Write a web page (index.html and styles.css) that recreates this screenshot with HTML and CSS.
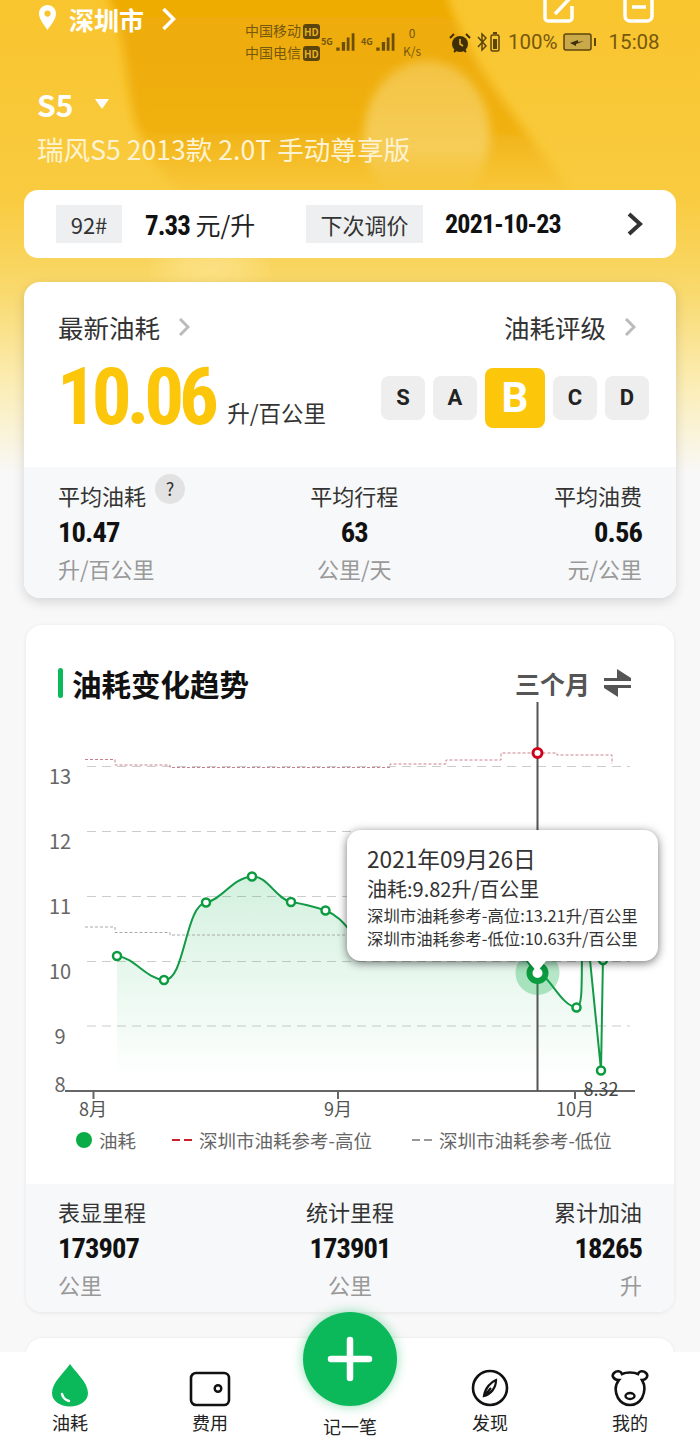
FILE: index.html
```html
<!DOCTYPE html>
<html lang="zh-CN">
<head>
    <meta charset="UTF-8">
    <meta name="viewport" content="width=device-width, initial-scale=1.0">
    <title>油耗</title>
    <link rel="stylesheet" href="styles.css">
</head>
<body>
<div class="page">
    <!-- yellow backdrop behind the header -->
    <svg class="hero-bg" viewBox="0 0 700 500" preserveAspectRatio="none">
        <defs>
            <linearGradient id="heroFade" x1="0" y1="0" x2="0" y2="1">
                <stop offset="0" stop-color="#f9c52e"/>
                <stop offset="0.4" stop-color="#f9cb40"/>
                <stop offset="0.58" stop-color="#f9d96c"/>
                <stop offset="0.78" stop-color="#fbeeb9"/>
                <stop offset="0.95" stop-color="#f8f8f8"/>
            </linearGradient>
            <linearGradient id="blobFill" x1="0" y1="0" x2="0" y2="1">
                <stop offset="0" stop-color="#eeaa04"/>
                <stop offset="0.6" stop-color="#f0b010"/>
                <stop offset="1" stop-color="#f6c232" stop-opacity="0"/>
            </linearGradient>
            <linearGradient id="eggFill" x1="0" y1="0" x2="0" y2="1">
                <stop offset="0" stop-color="#f3c343"/>
                <stop offset="0.6" stop-color="#f6cd58"/>
                <stop offset="1" stop-color="#f7c83c" stop-opacity="0"/>
            </linearGradient>
            <filter id="soft"><feGaussianBlur stdDeviation="5"/></filter>
            <filter id="softer"><feGaussianBlur stdDeviation="14"/></filter>
        </defs>
        <rect width="700" height="500" fill="url(#heroFade)"/>
        <path d="M105 -10C140 60 110 130 180 190C300 225 470 230 570 190C520 120 470 70 445 -10Z" fill="url(#blobFill)" filter="url(#soft)"/>
        <ellipse cx="427" cy="135" rx="63" ry="74" fill="url(#eggFill)" filter="url(#soft)"/>
        <ellipse cx="210" cy="268" rx="50" ry="12" fill="#fde694" filter="url(#softer)"/>
    </svg>

    <!-- phone status bar, sits over the header -->
    <div class="status-bar">
        <div class="carriers">
            <div>中国移动<span class="hd">HD</span></div>
            <div>中国电信<span class="hd">HD</span></div>
        </div>
        <div class="signal"><span class="net">5G</span>
            <svg width="22" height="22" viewBox="0 0 20 20"><path d="M3 15h3v3H3zM8 10h3v8H8zM12.500 6h2.500v12h-2.500zM17 2h2.500v16H17z" fill="#6b4e08"/></svg>
        </div>
        <div class="signal"><span class="net">4G</span>
            <svg width="22" height="22" viewBox="0 0 20 20"><path d="M3 15h3v3H3zM8 10h3v8H8zM12.500 6h2.500v12h-2.500zM17 2h2.500v16H17z" fill="#6b4e08"/></svg>
        </div>
        <div class="speed"><span>0</span><span>K/s</span></div>
        <svg class="alarm" width="22" height="22" viewBox="0 0 22 22">
            <circle cx="11" cy="12" r="8" fill="#3f2f08"/>
            <path d="M11 7v5l3 2" stroke="#e8b020" stroke-width="1.600" fill="none"/>
            <path d="M1 6l4-4M21 6l-4-4M5 20l2-2M17 20l-2-2" stroke="#3f2f08" stroke-width="2"/>
        </svg>
        <svg class="bt" width="12" height="22" viewBox="0 0 12 22"><path d="M2 6l8 9-4 4V3l4 4-8 9" stroke="#5c450d" stroke-width="1.500" fill="none"/></svg>
        <svg class="mini-batt" width="10" height="20" viewBox="0 0 10 20"><rect x="1" y="3" width="8" height="16" rx="1.500" fill="none" stroke="#5c450d" stroke-width="1.500"/><rect x="3" y="7" width="4" height="10" fill="#5c450d"/><rect x="3" y="0" width="4" height="2" fill="#5c450d"/></svg>
        <span class="pct">100%</span>
        <svg class="batt" width="34" height="20" viewBox="0 0 34 20">
            <rect x="1" y="2" width="27" height="16" rx="2" fill="#c9a94a" stroke="#5c450d" stroke-width="1.500"/>
            <path d="M7 11l8-3v2l6-1-8 3v2z" fill="#3f2f08"/>
            <rect x="31" y="6" width="2" height="8" fill="#5c450d"/>
        </svg>
        <span class="clock">15:08</span>
    </div>

    <header class="hero">
        <div class="loc-row">
            <svg class="pin" width="17" height="25" viewBox="0 0 17 25"><path fill-rule="evenodd" d="M8.500 0C3.800 0 0 3.800 0 8.500 0 14 5 20 8.500 25 12 20 17 14 17 8.500 17 3.800 13.200 0 8.500 0zm0 5.500a3 3 0 1 1 0 6.200 3 3 0 0 1 0-6.200z" fill="#fff"/></svg>
            <span class="city">深圳市</span>
            <svg class="city-arrow" width="15" height="24" viewBox="0 0 15 24"><path d="M2.500 2l10 10-10 10" stroke="#fff" stroke-width="3.500" fill="none"/></svg>
            <div class="top-actions">
                <svg width="34" height="30" viewBox="0 0 34 30"><path d="M20 0H8a5 5 0 0 0-3 0 3 3 0 0 0-3 3v18a3 3 0 0 0 3 3h21a3 3 0 0 0 3-3V9M12 17L29-1" stroke="#fff" stroke-width="3.500" fill="none"/></svg>
                <svg width="32" height="30" viewBox="0 0 32 30"><path d="M2 0v19a5 5 0 0 0 5 5h17a5 5 0 0 0 5-5V0M9 1h14M9 10h14" stroke="#fff" stroke-width="3.500" fill="none"/></svg>
            </div>
        </div>
        <div class="car-row">
            <span class="car-name">S5</span>
            <span class="car-caret"></span>
        </div>
        <div class="car-model">瑞风S5 2013款 2.0T 手动尊享版</div>
    </header>

    <section class="price-bar">
        <span class="tag tag-oil">92#</span>
        <span class="price"><b class="num">7.33</b> 元/升</span>
        <span class="tag tag-next">下次调价</span>
        <b class="num next-date">2021-10-23</b>
        <svg class="price-arrow" width="18" height="24" viewBox="0 0 18 24"><path d="M3 2l11 10L3 22" stroke="#333" stroke-width="4" fill="none"/></svg>
    </section>

    <section class="card card-latest">
        <div class="latest-top">
            <div class="latest-heads">
                <span class="head-link">最新油耗<svg width="12" height="18" viewBox="0 0 12 18"><path d="M2 1l8 8-8 8" stroke="#bbb" stroke-width="3" fill="none"/></svg></span>
                <span class="head-link">油耗评级<svg width="12" height="18" viewBox="0 0 12 18"><path d="M2 1l8 8-8 8" stroke="#bbb" stroke-width="3" fill="none"/></svg></span>
            </div>
            <div class="latest-main">
                <span class="big-value num">10.06</span>
                <span class="big-unit">升/百公里</span>
                <div class="grades">
                    <span class="grade">S</span>
                    <span class="grade">A</span>
                    <span class="grade active">B</span>
                    <span class="grade">C</span>
                    <span class="grade">D</span>
                </div>
            </div>
        </div>
        <div class="stats stats-latest">
            <div class="stat">
                <div class="stat-label">平均油耗<span class="help">?</span></div>
                <div class="stat-value num">10.47</div>
                <div class="stat-unit">升/百公里</div>
            </div>
            <div class="stat center">
                <div class="stat-label">平均行程</div>
                <div class="stat-value num">63</div>
                <div class="stat-unit">公里/天</div>
            </div>
            <div class="stat right">
                <div class="stat-label">平均油费</div>
                <div class="stat-value num">0.56</div>
                <div class="stat-unit">元/公里</div>
            </div>
        </div>
    </section>

    <section class="card card-trend">
        <div class="trend-head">
            <span class="trend-bar"></span>
            <h2 class="trend-title">油耗变化趋势</h2>
            <span class="trend-range">三个月</span>
            <svg class="swap" width="27" height="28" viewBox="0 0 27 28"><path d="M13 0l14 9v3H0V9h13zM14 28L0 19v-3h27v3H14z" fill="#555"/></svg>
        </div>

        <div class="chart">
            <!-- viewBox uses page coordinates so the data reads straight off the picture -->
            <svg class="chart-svg" width="648" height="409" viewBox="26 702 648 409">
                <defs>
                    <linearGradient id="areaFill" x1="0" y1="0" x2="0" y2="1">
                        <stop offset="0" stop-color="#0cb04a" stop-opacity="0.18"/>
                        <stop offset="0.45" stop-color="#0cb04a" stop-opacity="0.1"/>
                        <stop offset="1" stop-color="#0cb04a" stop-opacity="0"/>
                    </linearGradient>
                </defs>
                <g class="grid">
                    <path d="M87 766.500H630M87 831.500H630M87 896.500H630M87 961.500H630M87 1026H630"/>
                </g>
                <path d="M117 956C135 958 145 978 164 980C185 982 185 905 206 902.500C222 900 232 878 252 876.500C268 876 275 898 291 902C305 904 312 906 325.500 910.500C345 918 350 935 360 940C420 900 500 920 525 958C530 965 533 970 537.500 973C550 975 560 1005 576.500 1007.500C585 1008 580 960 583 900C586 880 587 900 590 960L601 1070L603 957V1080H117Z" fill="url(#areaFill)"/>
                <path class="ref-high" d="M85 759.500H115V765H170V767.500H390V764H446V760H501V753H557V755H612V764"/>
                <path class="ref-low" d="M85 927H115V932.500H170V935H350"/>
                <path class="fuel-line" d="M117 956C135 958 145 978 164 980C185 982 185 905 206 902.500C222 900 232 878 252 876.500C268 876 275 898 291 902C305 904 312 906 325.500 910.500C345 918 350 935 360 940C420 900 500 920 525 958C530 965 533 970 537.500 973C550 975 560 1005 576.500 1007.500C585 1008 580 960 583 900C586 880 587 900 590 960L601 1070L603 957"/>
                <g class="fuel-dots">
                    <circle cx="117" cy="956" r="4"/><circle cx="164" cy="980" r="4"/>
                    <circle cx="206" cy="902.500" r="4"/><circle cx="252" cy="876.500" r="4"/>
                    <circle cx="291" cy="902" r="4"/><circle cx="325.500" cy="910.500" r="4"/>
                    <circle cx="576.500" cy="1007.500" r="4"/><circle cx="601" cy="1070.500" r="4"/>
                    <circle cx="603" cy="960" r="4"/>
                </g>
                <path class="axis" d="M65 1091H635M93.500 1091V1099M338 1091V1099M575 1091V1099"/>
                <path class="cursor" d="M537.500 702V1091"/>
                <circle cx="537.500" cy="753" r="4.500" fill="#fff" stroke="#d0021b" stroke-width="3"/>
                <circle cx="537.500" cy="973" r="22" fill="#0cb04a" fill-opacity="0.3"/>
                <circle cx="537.500" cy="973" r="8" fill="#fff" stroke="#0a9c3e" stroke-width="6"/>
                <g class="y-labels">
                    <text x="60" y="784">13</text><text x="60" y="849">12</text>
                    <text x="60" y="914">11</text><text x="60" y="979">10</text>
                    <text x="60" y="1044">9</text><text x="60" y="1092">8</text>
                </g>
                <text class="peak-label" x="601" y="1096">8.32</text>
            </svg>
            <div class="x-labels">
                <span class="x-label x-aug">8月</span>
                <span class="x-label x-sep">9月</span>
                <span class="x-label x-oct">10月</span>
            </div>
            <div class="tooltip">
                <div class="tip-date">2021年09月26日</div>
                <div class="tip-main">油耗:9.82升/百公里</div>
                <div class="tip-ref">深圳市油耗参考-高位:13.21升/百公里</div>
                <div class="tip-ref">深圳市油耗参考-低位:10.63升/百公里</div>
            </div>
        </div>

        <div class="legend">
            <span class="legend-dot"></span><span class="legend-text">油耗</span>
            <span class="legend-dash red"></span><span class="legend-text">深圳市油耗参考-高位</span>
            <span class="legend-dash gray"></span><span class="legend-text">深圳市油耗参考-低位</span>
        </div>

        <div class="stats stats-trend">
            <div class="stat">
                <div class="stat-label">表显里程</div>
                <div class="stat-value num">173907</div>
                <div class="stat-unit">公里</div>
            </div>
            <div class="stat center">
                <div class="stat-label">统计里程</div>
                <div class="stat-value num">173901</div>
                <div class="stat-unit">公里</div>
            </div>
            <div class="stat right">
                <div class="stat-label">累计加油</div>
                <div class="stat-value num">18265</div>
                <div class="stat-unit">升</div>
            </div>
        </div>
    </section>

    <div class="card card-next"></div>

    <nav class="tabbar">
        <div class="tab active">
            <svg width="38" height="44" viewBox="0 0 38 44"><path d="M19 1C14 9 1 19 1 30c0 8 8 13.500 18 13.500S37 38 37 30C37 19 24 9 19 1z" fill="#0cb95a"/><path d="M11 31c1 4 3 6 7 7" stroke="#fff" stroke-width="2.500" fill="none" stroke-linecap="round"/></svg>
            <span>油耗</span>
        </div>
        <div class="tab">
            <svg width="42" height="36" viewBox="0 0 42 36"><rect x="2" y="2" width="38" height="32" rx="5" fill="none" stroke="#111" stroke-width="2.600"/><circle cx="29" cy="17.500" r="3.300" fill="none" stroke="#111" stroke-width="2.400"/></svg>
            <span>费用</span>
        </div>
        <div class="tab tab-add">
            <span>记一笔</span>
        </div>
        <div class="tab">
            <svg width="38" height="38" viewBox="0 0 38 38"><circle cx="19" cy="19" r="17" fill="none" stroke="#111" stroke-width="2.600"/><path d="M25 11C20 13 14 19 13 27 20 25 25 19 25 11zM13 27l7-8" fill="none" stroke="#111" stroke-width="2.200"/></svg>
            <span>发现</span>
        </div>
        <div class="tab">
            <svg width="38" height="38" viewBox="0 0 38 38"><path d="M8 11C3 11 0 7 3 4 6 1 10 2 11 5 15 3 23 3 27 5 28 2 32 1 35 4 38 7 35 11 31 11 34 16 34 23 31 29 28 34 24 36 19 36 14 36 10 34 7 29 4 23 4 16 8 11z" fill="none" stroke="#111" stroke-width="2.600"/><ellipse cx="19" cy="27" rx="4.500" ry="3" fill="none" stroke="#111" stroke-width="2.400"/></svg>
            <span>我的</span>
        </div>
        <div class="fab">
            <svg width="46" height="46" viewBox="0 0 46 46"><path d="M23 4V42M4 23H42" stroke="#fff" stroke-width="6.500" stroke-linecap="round"/></svg>
        </div>
    </nav>
</div>
</body>
</html>
```

FILE: styles.css
```css
* {
    box-sizing: border-box;
}
body {
    margin: 0;
    background: #f8f8f8;
    font-family: "Noto Sans CJK SC", "Noto Sans", sans-serif;
    color: #222;
}
.page {
    position: relative;
    width: 700px;
    height: 1443px;
    overflow: hidden;
    background: #f8f8f8;
}
.num {
    font-family: "Roboto Condensed", Roboto, sans-serif;
    font-weight: 700;
}

/* header */
.hero-bg {
    position: absolute;
    left: 0;
    top: 0;
    width: 700px;
    height: 500px;
}
.hero {
    position: relative;
    height: 190px;
    padding: 0 37px;
    color: #fff;
}
.loc-row {
    display: flex;
    align-items: center;
    height: 38px;
}
.pin {
    margin-left: 2px;
    margin-top: -4px;
}
.city {
    margin-left: 13px;
    font-size: 25px;
    font-weight: 700;
}
.city-arrow {
    margin-left: 17px;
}
.top-actions {
    position: absolute;
    top: -3px;
    left: 543px;
    display: flex;
    gap: 46px;
}
.car-row {
    display: flex;
    align-items: center;
    height: 40px;
    margin-top: 46px;
}
.car-name {
    font-size: 30px;
    font-weight: 700;
}
.car-caret {
    width: 0;
    height: 0;
    margin-left: 22px;
    border-left: 7px solid transparent;
    border-right: 7px solid transparent;
    border-top: 10px solid #fff;
}
.car-model {
    margin-top: 7px;
    font-size: 26.600px;
    line-height: 36px;
    color: #fdf3d2;
}

/* status bar */
.status-bar {
    position: absolute;
    z-index: 2;
    left: 245px;
    top: 22px;
    width: 420px;
    height: 40px;
    display: flex;
    align-items: center;
    color: #76580e;
}
.carriers {
    font-size: 14px;
    line-height: 20px;
    width: 74px;
    white-space: nowrap;
}
.hd {
    margin-left: 2px;
    padding: 0 1px;
    border-radius: 3px;
    background: #5c450d;
    color: #e8b020;
    font-size: 10px;
    font-weight: 700;
}
.signal {
    display: flex;
    align-items: center;
    width: 38px;
    margin-left: 2px;
}
.net {
    align-self: flex-start;
    margin-top: 4px;
    font-size: 9px;
    font-weight: 700;
}
.speed {
    display: flex;
    flex-direction: column;
    align-items: center;
    width: 24px;
    margin-left: 1px;
    font-size: 12px;
    line-height: 18px;
}
.alarm {
    margin-left: 25px;
    margin-top: 2px;
}
.bt {
    margin-left: 5px;
}
.mini-batt {
    margin-left: 2px;
}
.pct {
    margin-left: 8px;
    font-family: Roboto, sans-serif;
    font-size: 20.500px;
}
.batt {
    margin-left: 5px;
}
.clock {
    margin-left: 12px;
    font-family: Roboto, sans-serif;
    font-size: 20.500px;
}

/* price strip */
.price-bar {
    position: relative;
    display: flex;
    align-items: center;
    height: 68px;
    margin: 0 24px;
    padding-left: 32px;
    background: #fff;
    border-radius: 14px;
}
.tag {
    display: block;
    height: 38px;
    line-height: 38px;
    text-align: center;
    background: #eeeff0;
    font-size: 22px;
    color: #333;
}
.tag-oil {
    width: 66px;
}
.tag-next {
    width: 117px;
}
.price {
    width: 161px;
    margin-left: 23px;
    font-size: 25px;
    color: #222;
}
.price .num {
    font-size: 27px;
    letter-spacing: -1px;
    color: #111;
}
.next-date {
    margin-left: 22px;
    font-size: 26px;
    letter-spacing: -0.8px;
    color: #111;
}
.price-arrow {
    margin-left: auto;
    margin-right: 32px;
}

/* cards */
.card {
    background: #fff;
    border-radius: 16px;
    overflow: hidden;
}
.card-latest {
    position: relative;
    margin: 24px 24px 0;
    height: 316px;
    box-shadow: 0 4px 12px rgba(0, 0, 0, 0.14);
}
.latest-top {
    height: 185px;
    padding: 25px 34px 0;
}
.latest-heads {
    display: flex;
    justify-content: space-between;
}
.head-link {
    display: flex;
    align-items: center;
    gap: 18px;
    padding-right: 6px;
    font-size: 25.500px;
    line-height: 40px;
    color: #333;
}
.latest-main {
    display: flex;
    align-items: flex-start;
    margin-top: 5px;
}
.big-value {
    margin-left: -1px;
    font-size: 79px;
    line-height: 90px;
    letter-spacing: -5.200px;
    color: #fcc60b;
}
.big-unit {
    margin-left: 13.500px;
    margin-top: 42px;
    font-size: 22.500px;
    line-height: 36px;
    color: #333;
}
.grades {
    display: flex;
    align-items: center;
    gap: 8px;
    margin-left: auto;
    margin-right: -7px;
    height: 60px;
    margin-top: 16px;
}
.grade {
    width: 44px;
    height: 44px;
    line-height: 44px;
    text-align: center;
    background: #eeeeee;
    border-radius: 8px;
    font-family: Roboto, sans-serif;
    font-size: 22px;
    font-weight: 700;
    color: #222;
}
.grade.active {
    width: 60px;
    height: 60px;
    line-height: 60px;
    background: #fcc60b;
    color: #fff;
    font-size: 42px;
}

.stats {
    display: flex;
    justify-content: space-between;
    padding: 9px 34px 0;
    background: #f7f8f9;
}
.stats-latest {
    height: 131px;
}
.stat.center {
    text-align: center;
}
.stat.right {
    text-align: right;
}
.stat-label {
    position: relative;
    font-size: 22px;
    line-height: 39px;
    color: #333;
}
.stat-value {
    font-size: 28.500px;
    line-height: 36px;
    letter-spacing: -0.900px;
    color: #111;
}
.stat-unit {
    font-size: 22px;
    line-height: 34px;
    color: #999;
}
.help {
    position: absolute;
    left: 97px;
    top: -2px;
    width: 30px;
    height: 30px;
    line-height: 28px;
    border-radius: 50%;
    background: #e2e2e2;
    text-align: center;
    font-size: 18px;
    color: #333;
}

/* trend chart */
.card-trend {
    position: relative;
    margin: 27px 26px 0;
    height: 687px;
    box-shadow: 0 1px 4px rgba(0, 0, 0, 0.08);
}
.trend-head {
    display: flex;
    align-items: center;
    height: 77px;
    padding: 38px 43px 0 32px;
}
.trend-bar {
    width: 5px;
    height: 30px;
    border-radius: 3px;
    background: #0cb95a;
}
.trend-title {
    margin: 0 0 0 9px;
    font-size: 29.500px;
    line-height: 36px;
    color: #111;
}
.trend-range {
    margin-left: auto;
    font-size: 25px;
    font-weight: 700;
    color: #555;
}
.swap {
    margin-left: 14px;
}
.chart {
    position: relative;
    height: 408px;
}
.chart-svg {
    display: block;
}
.chart-svg .grid path {
    fill: none;
    stroke: #ccc;
    stroke-width: 1;
    stroke-dasharray: 9 6;
}
.ref-high {
    fill: none;
    stroke: #c9808f;
    stroke-width: 1;
    stroke-dasharray: 3 2;
}
.ref-low {
    fill: none;
    stroke: #aaa;
    stroke-width: 1;
    stroke-dasharray: 3 2;
}
.fuel-line {
    fill: none;
    stroke: #129a46;
    stroke-width: 2;
}
.fuel-dots circle {
    fill: #fff;
    stroke: #0a9c3e;
    stroke-width: 2.500;
}
.axis {
    fill: none;
    stroke: #666;
    stroke-width: 2;
}
.cursor {
    fill: none;
    stroke: #555;
    stroke-width: 2;
}
.y-labels text {
    font-family: "Noto Sans CJK SC", sans-serif;
    font-size: 20px;
    fill: #666;
    text-anchor: middle;
}
.peak-label {
    font-family: "Noto Sans CJK SC", sans-serif;
    font-size: 18px;
    fill: #444;
    text-anchor: middle;
}
.x-labels {
    position: relative;
    height: 0;
}
.x-label {
    position: absolute;
    top: -16px;
    font-size: 18px;
    line-height: 26px;
    color: #555;
    transform: translateX(-50%);
}
.x-aug {
    left: 67px;
}
.x-sep {
    left: 312px;
}
.x-oct {
    left: 549px;
}
.tooltip {
    position: absolute;
    left: 321px;
    top: 128px;
    width: 311px;
    height: 131px;
    padding: 13px 20px 0;
    background: #fff;
    border-radius: 14px;
    box-shadow: 0 2px 10px rgba(0, 0, 0, 0.55);
}
.tooltip::after {
    content: "";
    position: absolute;
    left: 181px;
    top: 131px;
    border-left: 9px solid transparent;
    border-right: 9px solid transparent;
    border-top: 11px solid #fff;
}
.tip-date {
    font-size: 22.700px;
    line-height: 31px;
    color: #333;
}
.tip-main {
    font-size: 20px;
    line-height: 30px;
    color: #333;
}
.tip-ref {
    font-size: 16.400px;
    line-height: 23px;
    color: #333;
}
.legend {
    display: flex;
    align-items: center;
    height: 30px;
    margin-top: 15px;
    padding-left: 50px;
}
.legend-dot {
    width: 16px;
    height: 16px;
    border-radius: 50%;
    background: #0aad45;
}
.legend-text {
    margin-left: 7px;
    font-size: 18.500px;
    color: #666;
}
.legend-dash {
    width: 20px;
    height: 2px;
    margin-left: 36px;
    background: repeating-linear-gradient(90deg, #999 0 8px, transparent 8px 12px);
}
.legend-dash.red {
    background: repeating-linear-gradient(90deg, #c8202c 0 8px, transparent 8px 12px);
}
.legend-dash.gray {
    margin-left: 40px;
}
.stats-trend {
    height: 129px;
    margin-top: 29px;
    padding: 8px 32px 0;
}
.card-next {
    margin: 26px 26px 0;
    height: 60px;
    box-shadow: 0 0 3px rgba(0, 0, 0, 0.08);
}

/* bottom tabs */
.tabbar {
    position: absolute;
    left: 0;
    bottom: 0;
    width: 700px;
    height: 91px;
    display: grid;
    grid-template-columns: repeat(5, 140px);
    background: #fff;
}
.tab {
    display: flex;
    flex-direction: column;
    align-items: center;
    justify-content: flex-end;
    gap: 1px;
    padding-bottom: 7px;
    font-size: 18px;
    line-height: 28px;
    color: #222;
}
.tab-add {
    padding-bottom: 3px;
}
.fab {
    position: absolute;
    left: 303px;
    top: -40px;
    width: 94px;
    height: 94px;
    display: flex;
    align-items: center;
    justify-content: center;
    border-radius: 50%;
    background: #0cb95a;
    box-shadow: 0 0 12px rgba(12, 185, 90, 0.45);
}
```
